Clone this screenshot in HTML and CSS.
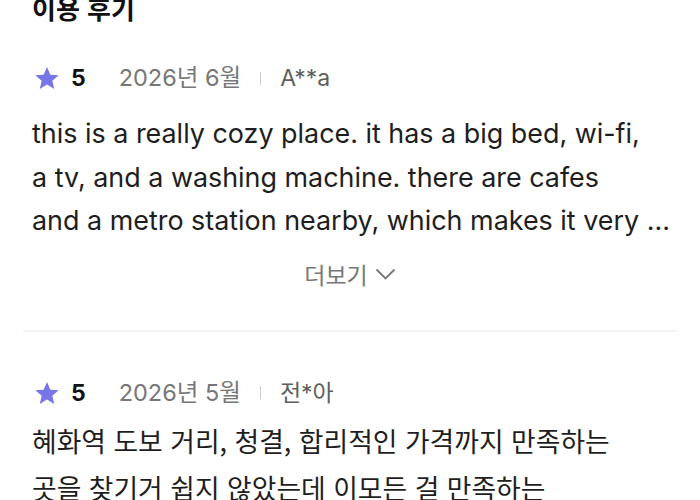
FILE: index.html
```html
<!DOCTYPE html>
<html lang="ko">
<head>
<meta charset="utf-8">
<link rel="stylesheet" href="styles.css">
</head>
<body>
<div class="page">
  <h2 class="title">이용 후기</h2>
  <section class="review">
    <div class="meta">
      <svg class="star" viewBox="0 0 24 24" width="26" height="26"><path d="M12 1.8l3.1 7.1 7.7.6-5.9 5 1.8 7.6L12 18l-6.7 4.1 1.8-7.6-5.9-5 7.7-.6z" fill="#7776e8"/></svg>
      <span class="score">5</span>
      <span class="date">2026년 6월</span>
      <span class="sep"></span>
      <span class="user">A**a</span>
    </div>
    <p class="body">this is a really cozy place. it has a big bed, wi-fi,<br>a tv, and a washing machine. there are cafes<br>and a metro station nearby, which makes it very ...</p>
    <div class="more">
      <span>더보기</span>
      <svg class="chev" viewBox="0 0 21 12" width="21" height="12"><path d="M1.5 1.5l9 9 9-9" fill="none" stroke="#777" stroke-width="1.8"/></svg>
    </div>
  </section>
  <hr class="divider">
  <section class="review">
    <div class="meta">
      <svg class="star" viewBox="0 0 24 24" width="26" height="26"><path d="M12 1.8l3.1 7.1 7.7.6-5.9 5 1.8 7.6L12 18l-6.7 4.1 1.8-7.6-5.9-5 7.7-.6z" fill="#7776e8"/></svg>
      <span class="score">5</span>
      <span class="date">2026년 5월</span>
      <span class="sep"></span>
      <span class="user">전*아</span>
    </div>
    <p class="body ko">혜화역 도보 거리, 청결, 합리적인 가격까지 만족하는<br>곳을 찾기거 쉽지 않았는데 이모든 걸 만족하는</p>
  </section>
</div>
</body>
</html>
```
FILE: styles.css
```css
html, body {
  margin: 0;
  padding: 0;
  background: #fff;
  overflow: hidden;
}
.page {
  padding: 0 32px;
  font-family: "Inter", "Noto Sans CJK KR", sans-serif;
  color: #1e1e1e;
}
.title {
  margin: -12px 0 0 0;
  font-size: 26px;
  font-weight: 700;
  line-height: 40px;
  font-family: "Noto Sans CJK KR", sans-serif;
  color: #111;
}
.review {
  display: flex;
  flex-direction: column;
}
.meta {
  display: flex;
  align-items: center;
  height: 40px;
  line-height: 40px;
  margin-top: 30px;
}
.review + .divider + .review .meta {
  margin-top: 41px;
}
.star {
  margin-left: 2px;
}
.score {
  margin-left: 11px;
  font-size: 23px;
  font-weight: 700;
  color: #111;
}
.date {
  margin-left: 33px;
  font-size: 23.5px;
  color: #777;
}
.sep {
  width: 1px;
  height: 13px;
  background: #ccc;
  margin: 0 19px 0 19px;
}
.user {
  font-size: 23px;
  color: #5e5e5e;
}
.body {
  margin: 14px 0 0 0;
  font-size: 26.9px;
  line-height: 43.5px;
  color: #1e1e1e;
  white-space: nowrap;
}
.body.ko {
  font-family: "Noto Sans CJK KR", sans-serif;
  font-size: 26.8px;
  line-height: 47px;
  margin-top: 4px;
}
.more {
  display: flex;
  justify-content: center;
  align-items: center;
  gap: 7px;
  margin-top: 16px;
  font-size: 23px;
  line-height: 30px;
  color: #777;
  font-family: "Noto Sans CJK KR", sans-serif;
  height: 30px;
}
.divider {
  border: none;
  height: 2px;
  background: #f3f3f3;
  margin: 41px -9px 0 -9px;
}
```
